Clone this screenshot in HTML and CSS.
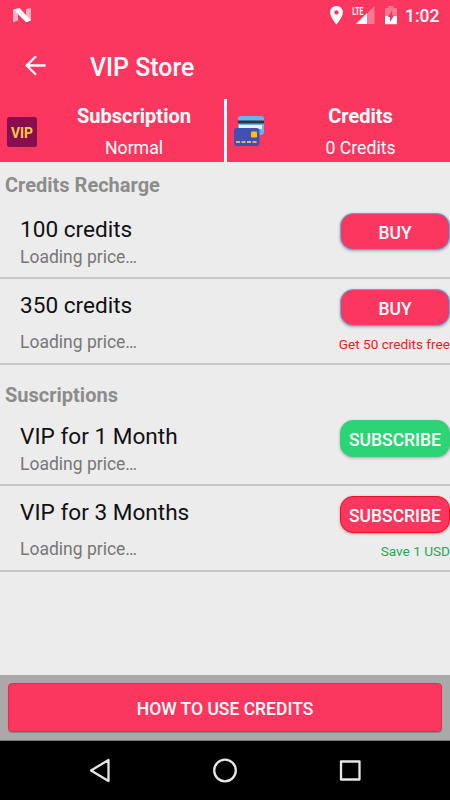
FILE: index.html
```html
<!DOCTYPE html>
<html lang="en">
    <head>
        <meta charset="UTF-8">
        <meta name="viewport" content="width=device-width, initial-scale=1.0">
        <title>VIP Store</title>
        <link rel="stylesheet" href="styles.css">
    </head>
    <body>
        <header class="top">
            <div class="statusBar">
                <svg class="nIcon" width="20" height="16" viewBox="0 0 20 16">
                    <path d="M1 2 6 .5v12L1 14.500zM14 1l5-1v12.500l-5 1.500z" fill="#fff" opacity=".6"/>
                    <path d="M1.500 1.500 7.500 0 19 12.500 14 14.300z" fill="#fff"/>
                </svg>
                <svg class="pinIcon" width="13" height="19" viewBox="0 0 13 19">
                    <path fill-rule="evenodd" d="M6.500 0A6.400 6.400 0 0 0 .1 6.400C.1 11 6.500 18.500 6.500 18.500S12.900 11 12.900 6.400A6.400 6.400 0 0 0 6.500 0m0 4.200a2.200 2.200 0 1 1 0 4.400 2.200 2.200 0 0 1 0-4.400" fill="#fff"/>
                </svg>
                <svg class="signalIcon" width="23" height="19" viewBox="0 0 23 19">
                    <path d="M22.500 0v18H4z" fill="#fff" opacity=".32"/>
                    <path d="M15 7.300V18H4z" fill="#fff"/>
                    <text x=".3" y="8.500" class="lte" textLength="11" lengthAdjust="spacingAndGlyphs">LTE</text>
                </svg>
                <svg class="batteryIcon" width="12" height="19" viewBox="0 0 12 19">
                    <path d="M0 2h3.500V0h5v2H12v8H0z" fill="#fff" opacity=".32"/>
                    <path d="M0 10h12v8.200H0z" fill="#fff"/>
                    <path d="M7 4.500v4.800h2.200L5 16v-5H2.800z" fill="#fc375f"/>
                </svg>
                <span class="clock">1:02</span>
            </div>
            <div class="appBar">
                <svg width="22" height="20" viewBox="0 0 22 20" fill="none" stroke="#fff" stroke-width="2.300">
                    <path d="M20.500 9.500H2.300M11 .3 1.800 9.500l9.200 9.200"/>
                </svg>
                <h1>VIP Store</h1>
            </div>
            <div class="account">
                <div class="accountItem">
                    <svg class="vipIcon" width="30" height="30" viewBox="0 0 30 30">
                        <rect width="30" height="30" rx="2.500" fill="#880e4f"/>
                        <text x="4" y="20.500" class="vipText" textLength="22" lengthAdjust="spacingAndGlyphs">VIP</text>
                    </svg>
                    <div class="accountText">
                        <b>Subscription</b>
                        <span>Normal</span>
                    </div>
                </div>
                <div class="accountItem credits">
                    <svg class="cardIcon" width="30" height="30" viewBox="0 0 30 30">
                        <rect x="4" width="26" height="19" rx="3" fill="#64b5f6"/>
                        <path d="M4 4.500h26v3H4z" fill="#37352f"/>
                        <path d="M5 9h23v4H5z" fill="#e3f2fd"/>
                        <rect y="12" width="25.500" height="18" rx="3" fill="#3f51b5"/>
                        <rect x="17" y="15.500" width="6" height="6" rx="1" fill="#ffc107"/>
                        <path d="M2 26h22" stroke="#d5b56c" stroke-width="1.800" stroke-dasharray="4 1.500"/>
                    </svg>
                    <div class="accountText">
                        <b>Credits</b>
                        <span>0 Credits</span>
                    </div>
                </div>
            </div>
        </header>
        <main>
            <h2>Credits Recharge</h2>
            <ul>
                <li>
                    <div class="name">100 credits</div>
                    <button class="btn buy">BUY</button>
                    <div class="price">Loading price…</div>
                </li>
                <li class="tall">
                    <div class="name">350 credits</div>
                    <button class="btn buy">BUY</button>
                    <div class="price">Loading price…</div>
                    <div class="note free">Get 50 credits free</div>
                </li>
            </ul>
            <h2 class="second">Suscriptions</h2>
            <ul>
                <li>
                    <div class="name">VIP for 1 Month</div>
                    <button class="btn green">SUBSCRIBE</button>
                    <div class="price">Loading price…</div>
                </li>
                <li class="tall">
                    <div class="name">VIP for 3 Months</div>
                    <button class="btn red">SUBSCRIBE</button>
                    <div class="price">Loading price…</div>
                    <div class="note save">Save 1 USD</div>
                </li>
            </ul>
        </main>
        <div class="bottom">
            <button class="howTo">HOW TO USE CREDITS</button>
        </div>
        <nav>
            <svg width="24" height="26" viewBox="0 0 24 26">
                <path d="M20.500 2v21L3 12.500z"/>
            </svg>
            <svg width="26" height="26" viewBox="0 0 26 26">
                <circle cx="13" cy="12.500" r="10.800"/>
            </svg>
            <svg width="24" height="26" viewBox="0 0 24 26">
                <path d="M3 3.500h18.500v18H3z"/>
            </svg>
        </nav>
    </body>
</html>
```

FILE: styles.css
```css
* {
    box-sizing: border-box;
}
body {
    margin: 0;
    width: 450px;
    height: 800px;
    display: flex;
    flex-direction: column;
    overflow: hidden;
    background-color: #ececec;
    font-family: Roboto, "Liberation Sans", sans-serif;
}
.top {
    height: 162px;
    background-color: #fc375f;
    color: #fff;
}
.statusBar {
    height: 32px;
    display: flex;
    align-items: flex-start;
    padding: 6px 9px 0 12px;
}
.nIcon {
    margin-top: 2px;
}
.pinIcon {
    margin-left: auto;
}
.signalIcon {
    margin-left: 9px;
}
.batteryIcon {
    margin-left: 10px;
}
.lte {
    font-size: 10px;
    font-weight: bold;
    fill: #fff;
}
.clock {
    width: 36px;
    margin-left: 8px;
    font-size: 17.500px;
    line-height: 20px;
    font-weight: 500;
    white-space: nowrap;
}
.appBar {
    height: 67px;
    display: flex;
    align-items: center;
    padding-left: 25px;
}
h1 {
    margin: 4px 0 0 43px;
    font-size: 24.900px;
    line-height: 30px;
    font-weight: 500;
}
.account {
    height: 63px;
    display: flex;
}
.accountItem {
    width: 224px;
    display: flex;
    padding-left: 7px;
}
.credits {
    width: 226px;
    border-left: 3px solid #fff;
}
.vipIcon {
    margin-top: 18px;
}
.cardIcon {
    margin-top: 17px;
}
.vipText {
    font-size: 15px;
    font-weight: bold;
    fill: #ffca45;
}
.accountText {
    flex: 1;
    padding: 2px 0 0 7px;
    display: flex;
    flex-direction: column;
    align-items: center;
    font-size: 17.700px;
    line-height: 31px;
}
.accountText span {
    padding-top: 1px;
}
.accountText b {
    font-size: 20px;
}
.credits .accountText {
    padding-left: 7px;
}
main {
    flex: 1;
}
h2 {
    margin: 0;
    height: 42px;
    padding: 11px 0 0 5px;
    font-size: 20px;
    line-height: 24px;
    color: #8c8c8c;
}
.second {
    height: 46px;
    padding-top: 18px;
}
ul {
    margin: 0;
    padding: 0;
}
li {
    list-style: none;
    height: 75px;
    display: grid;
    grid-template-columns: 1fr 110px;
    grid-template-rows: 39px 25px;
    align-items: end;
    border-bottom: 2px solid #c6c6c6;
}
.tall {
    height: 86px;
    grid-template-rows: 40px 34px;
}
.name {
    padding-left: 20px;
    font-size: 22.600px;
    line-height: 26px;
    color: #111;
}
.price {
    padding-left: 20px;
    font-size: 17.500px;
    line-height: 22px;
    color: #777;
}
.btn {
    height: 37px;
    align-self: start;
    margin-top: 9px;
    padding: 2px 0 0;
    border: 1.500px solid #45b2e8;
    border-radius: 13px;
    background-color: #fc375f;
    box-shadow: 0 1px 3px rgba(0, 0, 0, .3);
    color: #fff;
    font-family: inherit;
    font-size: 17.500px;
    font-weight: 500;
}
.tall .btn {
    margin-top: 10px;
}
.green {
    border-color: #2dd475;
    background-color: #2dd475;
}
.red {
    border-color: #f50a1e;
}
.note {
    justify-self: end;
    font-size: 13.600px;
    line-height: 18px;
    white-space: nowrap;
}
.free {
    color: #f51717;
}
.save {
    color: #1caa55;
}
.bottom {
    height: 66px;
    padding: 8px;
    background-color: #a9a9a9;
    border-bottom: 1px solid #777;
}
.howTo {
    width: 434px;
    height: 49px;
    padding: 2px 0 0;
    border: 1px solid #f82351;
    border-radius: 4px;
    background-color: #fc375f;
    box-shadow: 0 1px 1px rgba(0, 0, 0, .2);
    color: #fff;
    font-family: inherit;
    font-size: 17.500px;
    font-weight: 500;
}
nav {
    height: 59px;
    display: flex;
    justify-content: space-between;
    align-items: center;
    padding: 0 88px;
    background-color: #000;
}
nav svg {
    fill: none;
    stroke: #e6e6e6;
    stroke-width: 2.300;
    stroke-linejoin: round;
}
```
